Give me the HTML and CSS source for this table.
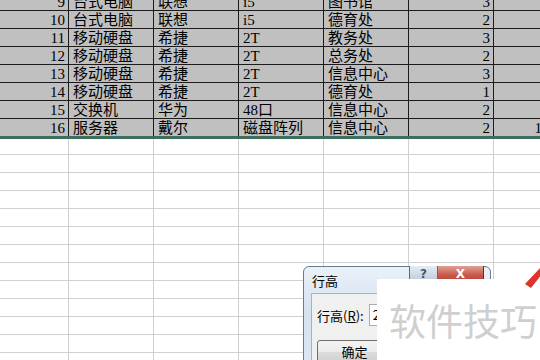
FILE: index.html
```html
<!DOCTYPE html>
<html lang="zh">
<head>
<meta charset="utf-8">
<title>行高</title>
<link rel="stylesheet" href="styles.css">
</head>
<body>
<div class="sheet">
  <div class="rows sel">
    <div class="row"><div class="c n">9</div><div class="c">台式电脑</div><div class="c">联想</div><div class="c">i5</div><div class="c">图书馆</div><div class="c n">3</div><div class="c n"></div></div>
    <div class="row"><div class="c n">10</div><div class="c">台式电脑</div><div class="c">联想</div><div class="c">i5</div><div class="c">德育处</div><div class="c n">2</div><div class="c n"></div></div>
    <div class="row"><div class="c n">11</div><div class="c">移动硬盘</div><div class="c">希捷</div><div class="c">2T</div><div class="c">教务处</div><div class="c n">3</div><div class="c n"></div></div>
    <div class="row"><div class="c n">12</div><div class="c">移动硬盘</div><div class="c">希捷</div><div class="c">2T</div><div class="c">总务处</div><div class="c n">2</div><div class="c n"></div></div>
    <div class="row"><div class="c n">13</div><div class="c">移动硬盘</div><div class="c">希捷</div><div class="c">2T</div><div class="c">信息中心</div><div class="c n">3</div><div class="c n"></div></div>
    <div class="row"><div class="c n">14</div><div class="c">移动硬盘</div><div class="c">希捷</div><div class="c">2T</div><div class="c">德育处</div><div class="c n">1</div><div class="c n"></div></div>
    <div class="row"><div class="c n">15</div><div class="c">交换机</div><div class="c">华为</div><div class="c">48口</div><div class="c">信息中心</div><div class="c n">2</div><div class="c n"></div></div>
    <div class="row last"><div class="c n">16</div><div class="c">服务器</div><div class="c">戴尔</div><div class="c">磁盘阵列</div><div class="c">信息中心</div><div class="c n">2</div><div class="c n price">12000</div></div>
  </div>
  <div class="rows blank">
    <div class="row first"><div class="c"></div><div class="c"></div><div class="c"></div><div class="c"></div><div class="c"></div><div class="c"></div><div class="c"></div></div>
    <div class="row"><div class="c"></div><div class="c"></div><div class="c"></div><div class="c"></div><div class="c"></div><div class="c"></div><div class="c"></div></div>
    <div class="row"><div class="c"></div><div class="c"></div><div class="c"></div><div class="c"></div><div class="c"></div><div class="c"></div><div class="c"></div></div>
    <div class="row"><div class="c"></div><div class="c"></div><div class="c"></div><div class="c"></div><div class="c"></div><div class="c"></div><div class="c"></div></div>
    <div class="row"><div class="c"></div><div class="c"></div><div class="c"></div><div class="c"></div><div class="c"></div><div class="c"></div><div class="c"></div></div>
    <div class="row"><div class="c"></div><div class="c"></div><div class="c"></div><div class="c"></div><div class="c"></div><div class="c"></div><div class="c"></div></div>
    <div class="row"><div class="c"></div><div class="c"></div><div class="c"></div><div class="c"></div><div class="c"></div><div class="c"></div><div class="c"></div></div>
    <div class="row"><div class="c"></div><div class="c"></div><div class="c"></div><div class="c"></div><div class="c"></div><div class="c"></div><div class="c"></div></div>
    <div class="row"><div class="c"></div><div class="c"></div><div class="c"></div><div class="c"></div><div class="c"></div><div class="c"></div><div class="c"></div></div>
    <div class="row"><div class="c"></div><div class="c"></div><div class="c"></div><div class="c"></div><div class="c"></div><div class="c"></div><div class="c"></div></div>
    <div class="row"><div class="c"></div><div class="c"></div><div class="c"></div><div class="c"></div><div class="c"></div><div class="c"></div><div class="c"></div></div>
    <div class="row"><div class="c"></div><div class="c"></div><div class="c"></div><div class="c"></div><div class="c"></div><div class="c"></div><div class="c"></div></div>
    <div class="row"><div class="c"></div><div class="c"></div><div class="c"></div><div class="c"></div><div class="c"></div><div class="c"></div><div class="c"></div></div>
  </div>
</div>

<div class="dialog">
  <div class="dlg-title">行高</div>
  <div class="dlg-btns">
    <div class="tbtn help">?</div>
    <div class="tbtn close">X</div>
  </div>
  <div class="dlg-body">
    <div class="field">
      <span class="lbl">行高(<u>R</u>):</span>
      <span class="input">2</span>
    </div>
    <div class="btn">确定</div>
  </div>
</div>

<div class="wm">软件技巧</div>

<svg class="arrow" width="20" height="24" viewBox="0 0 20 24">
  <polygon points="20,0 20,8 9,22 3,18" fill="#e0332b"/>
</svg>
</body>
</html>
```

FILE: styles.css
```css
html, body {
  margin: 0;
  padding: 0;
  width: 540px;
  height: 360px;
  overflow: hidden;
  background: #fff;
}

.sheet {
  margin-top: -7px;
  font-family: "Liberation Serif", "Noto Sans CJK SC", serif;
  font-size: 15px;
  color: #000;
}

.row {
  display: flex;
  width: 578px;
  height: 18px;
  box-sizing: border-box;
}

.c {
  flex: none;
  width: 85px;
  height: 100%;
  box-sizing: border-box;
  padding: 1px 0 0 4px;
  line-height: 17px;
  white-space: nowrap;
  overflow: hidden;
}

.c:first-child {
  width: 69px;
}

.c.n {
  text-align: right;
  padding: 1px 3px 0 0;
}

.c.price {
  padding-right: 6px;
}

.sel .row {
  background: #c0c0c0;
  border-bottom: 1px solid #1c1c1c;
}

.sel .c {
  border-right: 1px solid #1c1c1c;
}

.sel .row.last {
  height: 20px;
  border-bottom: 3px solid #3f6e5f;
}

.blank .row {
  border-bottom: 1px solid #d0d0d0;
}

.blank .row.first {
  height: 16px;
}

.blank .c {
  border-right: 1px solid #d0d0d0;
}

/* dialog */
.dialog {
  position: absolute;
  left: 303px;
  top: 266px;
  width: 188px;
  height: 110px;
  box-sizing: border-box;
  border: 1px solid #6a7b90;
  border-radius: 6px 6px 0 0;
  background: linear-gradient(#eaf1f9, #d6e2f0 40%, #dde8f4);
  font-family: "Noto Sans CJK SC", sans-serif;
  color: #000;
}

.dlg-title {
  height: 26px;
  box-sizing: border-box;
  padding: 6px 0 0 8px;
  font-size: 13px;
  line-height: 16px;
}

.dlg-btns {
  position: absolute;
  top: -1px;
  right: 6px;
  display: flex;
}

.tbtn {
  height: 19px;
  box-sizing: border-box;
  border: 1px solid #5b6a7d;
  border-top: none;
  font-family: "DejaVu Sans", sans-serif;
  font-weight: bold;
  font-size: 12px;
  line-height: 16px;
  text-align: center;
}

.tbtn.help {
  width: 29px;
  color: #4a5666;
  background: linear-gradient(#e4ebf3, #b8c5d6);
  border-radius: 0 0 0 4px;
}

.tbtn.close {
  width: 46px;
  color: #fff;
  background: linear-gradient(#e3a196, #c8574a 50%, #b73e30);
  border-left: none;
  border-radius: 0 0 4px 0;
  border-color: #6d2a22;
}

.dlg-body {
  margin: 0 7px;
  height: 90px;
  box-sizing: border-box;
  border: 1px solid #a3b2c6;
  background: #f0f0f0;
  padding: 10px 0 0 5px;
}

.field {
  display: flex;
  align-items: center;
  gap: 5px;
  height: 22px;
}

.lbl {
  font-size: 13px;
}

.lbl u {
  text-decoration: underline;
}

.input {
  flex: 1;
  height: 22px;
  box-sizing: border-box;
  border: 1px solid #abadb3;
  background: #fff;
  font-size: 13px;
  line-height: 20px;
  padding-left: 3px;
}

.btn {
  margin-top: 14px;
  width: 75px;
  height: 24px;
  box-sizing: border-box;
  border: 1px solid #707070;
  border-radius: 3px;
  background: linear-gradient(#f3f3f3, #ebebeb 50%, #dcdcdc 51%, #cfcfcf);
  font-size: 13px;
  line-height: 22px;
  text-align: center;
}

/* watermark */
.wm {
  position: absolute;
  left: 377px;
  top: 279px;
  right: 0;
  bottom: 0;
  background: #fff;
  box-sizing: border-box;
  padding: 21px 0 0 12px;
  font-family: "Noto Sans CJK SC", sans-serif;
  font-size: 37px;
  line-height: 40px;
  color: #cfcfcf;
  white-space: nowrap;
  overflow: hidden;
}

.arrow {
  position: absolute;
  left: 522px;
  top: 266px;
}
```
